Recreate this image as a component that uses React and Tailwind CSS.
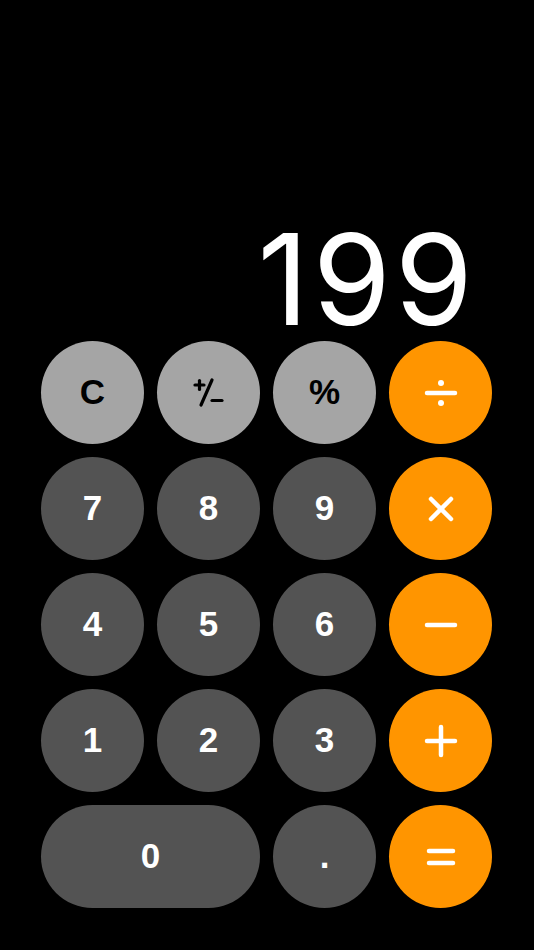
import React from 'react';

const light = 'bg-[#a5a5a5] text-black';
const dark = 'bg-[#535353] text-white';
const orange = 'bg-[#ff9500] text-white';

const Op = ({ kind }) => {
    const common = { stroke: 'currentColor', strokeWidth: 4.5, strokeLinecap: 'round', fill: 'none' };
    return (
        <svg width="34" height="34" viewBox="0 0 34 34">
            {kind === 'div' && (
                <>
                    <line x1="3" y1="17" x2="31" y2="17" {...common} />
                    <circle cx="17" cy="7" r="3" fill="currentColor" />
                    <circle cx="17" cy="27" r="3" fill="currentColor" />
                </>
            )}
            {kind === 'mul' && (
                <>
                    <line x1="7" y1="7" x2="27" y2="27" {...common} />
                    <line x1="27" y1="7" x2="7" y2="27" {...common} />
                </>
            )}
            {kind === 'sub' && <line x1="3" y1="17" x2="31" y2="17" {...common} />}
            {kind === 'add' && (
                <>
                    <line x1="3" y1="17" x2="31" y2="17" {...common} />
                    <line x1="17" y1="3" x2="17" y2="31" {...common} />
                </>
            )}
            {kind === 'eq' && (
                <>
                    <line x1="5" y1="11" x2="29" y2="11" {...common} />
                    <line x1="5" y1="23" x2="29" y2="23" {...common} />
                </>
            )}
        </svg>
    );
};

const PlusMinus = () => (
    <svg width="34" height="34" viewBox="0 0 34 34">
        <g stroke="currentColor" strokeWidth="3.2" strokeLinecap="round" fill="none">
            <line x1="3" y1="9" x2="12" y2="9" />
            <line x1="7.5" y1="4.5" x2="7.5" y2="13.5" />
            <line x1="20" y1="4" x2="9" y2="29" />
            <line x1="20" y1="24.5" x2="30" y2="24.5" />
        </g>
    </svg>
);

const Key = ({ children, tone, wide }) => (
    <button
        className={`h-[103px] ${wide ? 'col-span-2' : ''} rounded-full flex items-center justify-center text-[35px] font-bold ${tone}`}
        style={{ fontFamily: '"Liberation Sans", Arial, sans-serif' }}
    >
        {children}
    </button>
);

export default function App() {
    return (
        <div className="h-[950px] w-full bg-black flex flex-col justify-end px-[41px] pb-[42px] select-none">
            <div
                className="text-right text-white text-[126px] font-normal leading-none pr-[16px] mb-[-1px] tracking-[4px]"
                style={{ fontFamily: 'Inter, "Noto Sans", sans-serif' }}
            >
                199
            </div>
            <div className="grid grid-cols-4 gap-[13px] w-[451px]">
                <Key tone={light}>C</Key>
                <Key tone={light}><PlusMinus /></Key>
                <Key tone={light}>%</Key>
                <Key tone={orange}><Op kind="div" /></Key>

                <Key tone={dark}>7</Key>
                <Key tone={dark}>8</Key>
                <Key tone={dark}>9</Key>
                <Key tone={orange}><Op kind="mul" /></Key>

                <Key tone={dark}>4</Key>
                <Key tone={dark}>5</Key>
                <Key tone={dark}>6</Key>
                <Key tone={orange}><Op kind="sub" /></Key>

                <Key tone={dark}>1</Key>
                <Key tone={dark}>2</Key>
                <Key tone={dark}>3</Key>
                <Key tone={orange}><Op kind="add" /></Key>

                <Key tone={dark} wide>0</Key>
                <Key tone={dark}>.</Key>
                <Key tone={orange}><Op kind="eq" /></Key>
            </div>
        </div>
    );
}
